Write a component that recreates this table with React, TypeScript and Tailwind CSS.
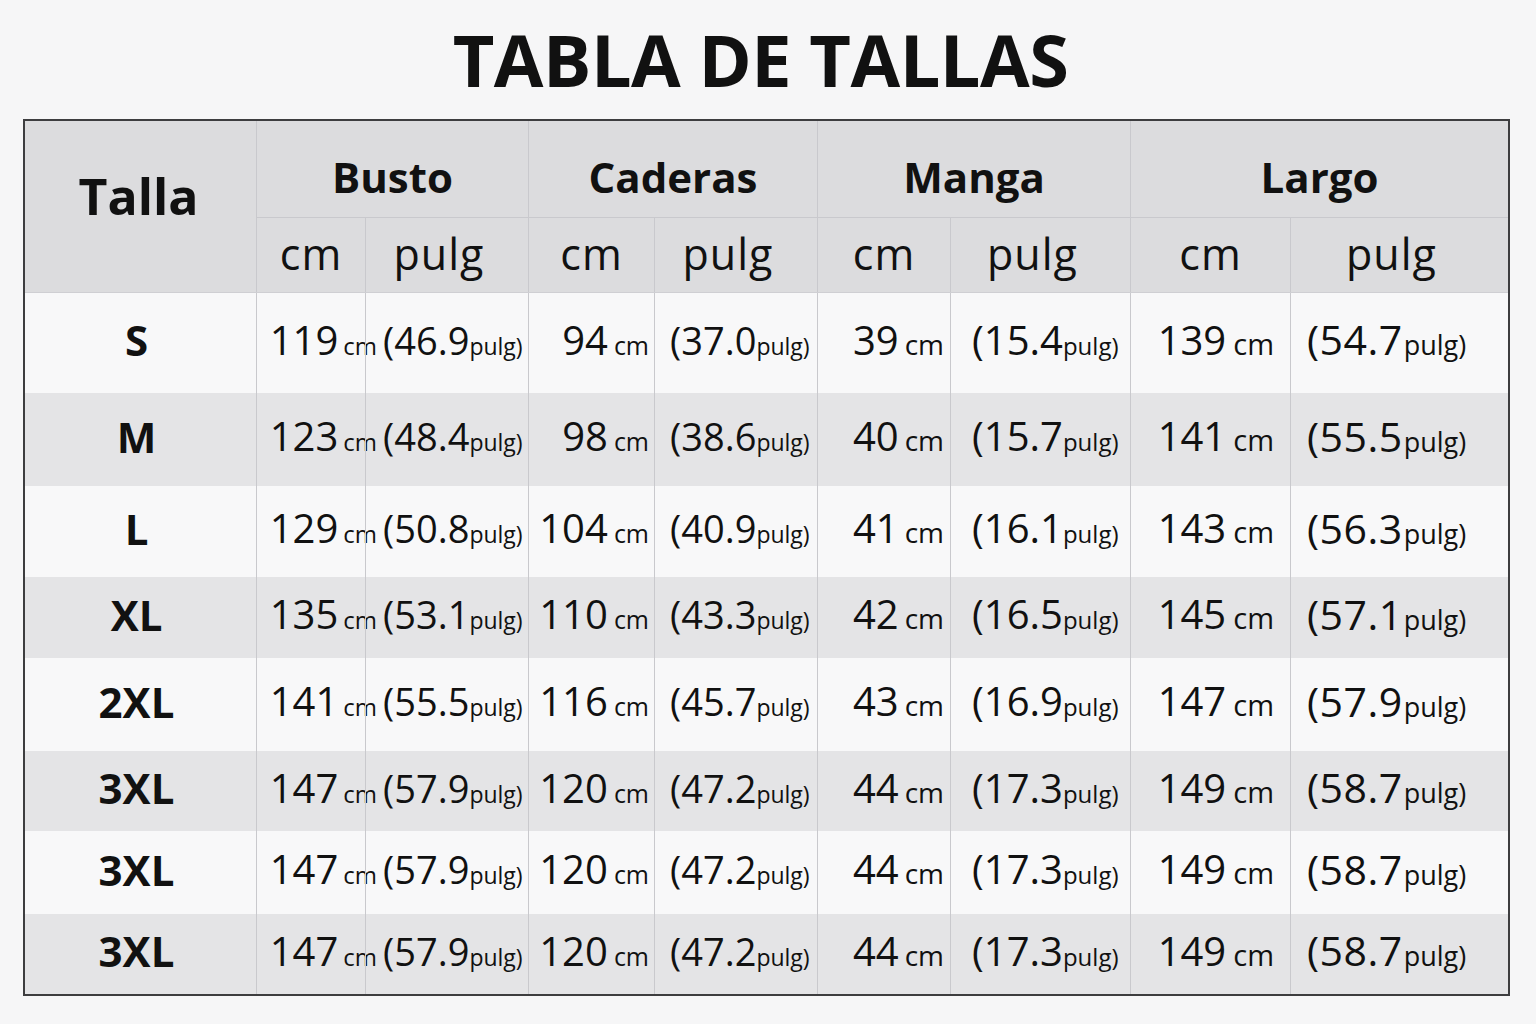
const COLS = 'grid grid-cols-[231px_109px_163px_126px_163px_133px_180px_160px_218px]';

type Row = { size: string; h: string; bg: string; v: [string, string, string, string, string, string, string, string] };

const ROWS: Row[] = [
  { size: 'S', h: 'h-[100px]', bg: 'bg-[#f8f8f9]', v: ['119', '46.9', '94', '37.0', '39', '15.4', '139', '54.7'] },
  { size: 'M', h: 'h-[93px]', bg: 'bg-[#e4e4e6]', v: ['123', '48.4', '98', '38.6', '40', '15.7', '141', '55.5'] },
  { size: 'L', h: 'h-[91px]', bg: 'bg-[#f8f8f9]', v: ['129', '50.8', '104', '40.9', '41', '16.1', '143', '56.3'] },
  { size: 'XL', h: 'h-[81px]', bg: 'bg-[#e4e4e6]', v: ['135', '53.1', '110', '43.3', '42', '16.5', '145', '57.1'] },
  { size: '2XL', h: 'h-[93px]', bg: 'bg-[#f8f8f9]', v: ['141', '55.5', '116', '45.7', '43', '16.9', '147', '57.9'] },
  { size: '3XL', h: 'h-[80px]', bg: 'bg-[#e4e4e6]', v: ['147', '57.9', '120', '47.2', '44', '17.3', '149', '58.7'] },
  { size: '3XL', h: 'h-[83px]', bg: 'bg-[#f8f8f9]', v: ['147', '57.9', '120', '47.2', '44', '17.3', '149', '58.7'] },
  { size: '3XL', h: 'h-[80px]', bg: 'bg-[#e4e4e6]', v: ['147', '57.9', '120', '47.2', '44', '17.3', '149', '58.7'] },
];

// per group: cm cell padding / overflow, cm unit, pulg padding and sizes
const GROUPS = [
  { cm: 'pr-0', cmText: '-mr-[12px]', unit: 'text-[24px] ml-[5px]', pulg: 'pl-[17px]', pNum: 'text-[38px]', pUnit: 'text-[23px]' },
  { cm: 'pr-[5px]', cmText: '', unit: 'text-[25px] ml-[6px]', pulg: 'pl-[15px]', pNum: 'text-[38px]', pUnit: 'text-[23px]' },
  { cm: 'pr-[6px]', cmText: '', unit: 'text-[28px] ml-[6px]', pulg: 'pl-[21px]', pNum: 'text-[40px]', pUnit: 'text-[24px]' },
  { cm: 'pr-[16px]', cmText: '', unit: 'text-[29px] ml-[7px]', pulg: 'pl-[16px]', pNum: 'text-[41px] tracking-[0.5px]', pUnit: 'text-[27px] ml-[1px]' },
];

function CmCell({ value, g }: { value: string; g: (typeof GROUPS)[number] }) {
  return (
    <div className={`flex items-center justify-end border-l border-[#c9c9cd] pb-[7px] ${g.cm}`}>
      <span className={`whitespace-nowrap leading-none ${g.cmText}`}>
        <span className="text-[40px]">{value}</span>
        <span className={g.unit}>cm</span>
      </span>
    </div>
  );
}

function PulgCell({ value, g }: { value: string; g: (typeof GROUPS)[number] }) {
  return (
    <div className={`flex items-center border-l border-[#c9c9cd] pb-[7px] ${g.pulg}`}>
      <span className="whitespace-nowrap leading-none">
        <span className={g.pNum}>({value}</span>
        <span className={g.pUnit}>pulg)</span>
      </span>
    </div>
  );
}

export default function App() {
  return (
    <div
      className="min-h-screen w-full bg-[#f6f6f7] text-[#111111] pt-[23px]"
      style={{ fontFamily: '"Open Sans", "Noto Sans", sans-serif' }}
    >
      <h1 className="ml-[23px] w-[1487px] text-center text-[72px] font-bold leading-none tracking-[-0.5px] pr-[12px]">
        TABLA DE TALLAS
      </h1>

      <div className="ml-[23px] mt-[24px] w-[1487px] border-2 border-[#3d3d3f] bg-[#f8f8f9]">
        {/* header */}
        <div className={`${COLS} grid-rows-[97px_74px] bg-[#dcdcde] border-b border-[#cfcfd3]`}>
          <div className="row-span-2 flex items-center justify-center pb-[22px] pr-[4px] text-[50px] font-bold leading-none">
            Talla
          </div>
          {['Busto', 'Caderas', 'Manga', 'Largo'].map((name) => (
            <div
              key={name}
              className="col-span-2 flex items-center justify-center border-l border-b border-[#c9c9cd] pt-[16px] text-[42px] font-bold leading-none"
            >
              {name}
            </div>
          ))}
          {GROUPS.map((_, i) => (
            <div key={`sub-${i}`} className="contents">
              <div className="flex items-center justify-center border-l border-[#c9c9cd] text-[43px] tracking-[1px] leading-none pb-[4px]">
                cm
              </div>
              <div className="flex items-center justify-center border-l border-[#c9c9cd] text-[43px] tracking-[1px] leading-none pb-[4px] pr-[16px]">
                pulg
              </div>
            </div>
          ))}
        </div>

        {/* body */}
        {ROWS.map((r, ri) => (
          <div key={ri} className={`${COLS} ${r.h} ${r.bg}`}>
            <div className="flex items-center justify-center pb-[6px] pr-[8px] text-[42px] font-bold leading-none">
              {r.size}
            </div>
            {GROUPS.map((g, gi) => (
              <div key={gi} className="contents">
                <CmCell value={r.v[gi * 2]} g={g} />
                <PulgCell value={r.v[gi * 2 + 1]} g={g} />
              </div>
            ))}
          </div>
        ))}
      </div>
    </div>
  );
}
